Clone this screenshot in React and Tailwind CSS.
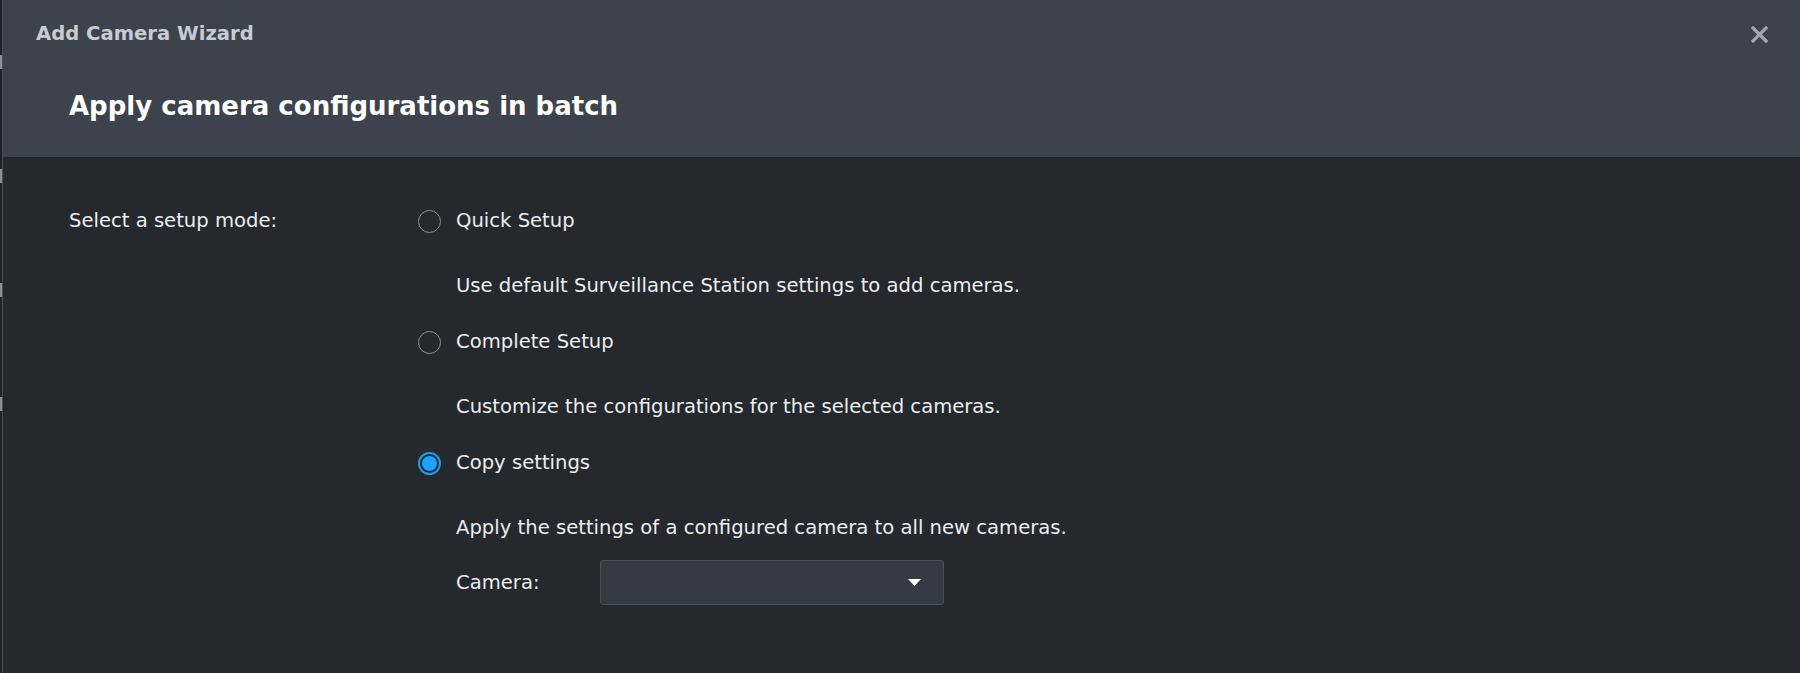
import React, { useState } from "react";

const font = { fontFamily: '"DejaVu Sans", Verdana, sans-serif' };

const options = [
  {
    id: "quick",
    label: "Quick Setup",
    desc: "Use default Surveillance Station settings to add cameras.",
  },
  {
    id: "complete",
    label: "Complete Setup",
    desc: "Customize the configurations for the selected cameras.",
  },
  {
    id: "copy",
    label: "Copy settings",
    desc: "Apply the settings of a configured camera to all new cameras.",
  },
];

const Radio = ({ checked }) =>
  checked ? (
    <span className="w-[23px] h-[23px] rounded-full border-2 border-[#1a9cf0] flex items-center justify-center shrink-0">
      <span className="w-[15px] h-[15px] rounded-full bg-[#1fa2ff]" />
    </span>
  ) : (
    <span className="w-[23px] h-[23px] rounded-full border-[1.5px] border-[#8a8e94] shrink-0" />
  );

const App = () => {
  const [mode, setMode] = useState("copy");

  return (
    <div className="w-[1800px] h-[673px] flex bg-[#25282d] overflow-hidden" style={font}>
      {/* sliver of the window behind */}
      <div className="w-[3px] bg-[#1e2126] border-r border-[#4a4f57] flex flex-col gap-[100px] pt-[55px]">
        <span className="h-[14px] w-[2px] bg-[#8d9197]" />
        <span className="h-[14px] w-[2px] bg-[#8d9197]" />
        <span className="h-[14px] w-[2px] bg-[#8d9197]" />
        <span className="h-[14px] w-[2px] bg-[#8d9197]" />
      </div>

      <div className="flex-1 flex flex-col">
        <div className="h-[157px] bg-[#3d434d] pt-[23px] pl-[33px] pr-[32px] shrink-0">
          <div className="flex items-center justify-between">
            <span className="text-[19.6px] leading-[22px] font-bold text-[#c8cbd0]">
              Add Camera Wizard
            </span>
            <svg width="17" height="17" viewBox="0 0 17 17" className="text-[#a3a7ad]">
              <path d="M2 2 L15 15 M15 2 L2 15" stroke="currentColor" strokeWidth="3.2" strokeLinecap="square" />
            </svg>
          </div>
          <h1 className="ml-[33px] mt-[46px] text-[26px] leading-[30px] font-bold text-white">
            Apply camera configurations in batch
          </h1>
        </div>

        <div className="flex pt-[53px] pl-[66px] text-[19.6px] leading-[22px] text-[#ebedef]">
          <div className="w-[349px]">Select a setup mode:</div>
          <div className="flex flex-col">
            {options.map((o, i) => (
              <div key={o.id} className={i > 0 ? "mt-[34px]" : ""}>
                <button
                  onClick={() => setMode(o.id)}
                  className="flex items-center h-[22px] gap-[15px] cursor-pointer"
                >
                  <Radio checked={mode === o.id} />
                  <span>{o.label}</span>
                </button>
                <p className="mt-[43px] pl-[38px]">{o.desc}</p>
              </div>
            ))}
            <div className="flex items-center mt-[21px] pl-[38px]">
              <span className="w-[144px]">Camera:</span>
              <div className="w-[344px] h-[45px] bg-[#353b44] border border-[#4a5059] rounded-[3px] flex items-center justify-end pr-[22px]">
                <svg width="13" height="7" viewBox="0 0 13 7">
                  <path d="M0 0 H13 L6.5 7 Z" fill="#ffffff" />
                </svg>
              </div>
            </div>
          </div>
        </div>
      </div>
    </div>
  );
};

export default App;
